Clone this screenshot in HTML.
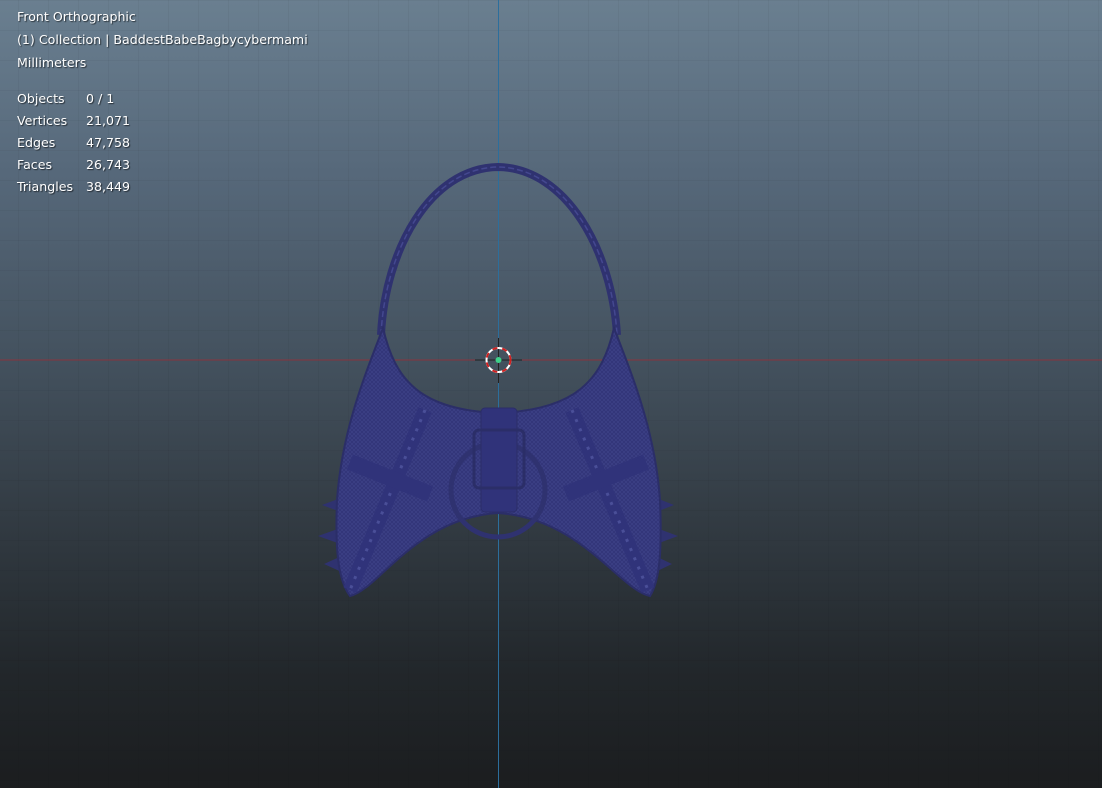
<!DOCTYPE html>
<html><head><meta charset="utf-8"><style>
html,body{margin:0;padding:0;}
body{width:1102px;height:788px;overflow:hidden;position:relative;
background:linear-gradient(to bottom,#6a7f90 0%,#56687a 22%,#44525f 45%,#333c44 65%,#22272b 85%,#1b1d1f 100%);
font-family:"DejaVu Sans","Liberation Sans",sans-serif;}
.grid{position:absolute;inset:0;
background-image:linear-gradient(to right,rgba(0,0,0,0.04) 1px,transparent 1px),linear-gradient(to bottom,rgba(0,0,0,0.04) 1px,transparent 1px);
background-size:30px 30px;background-position:18px 0;}
.t{position:absolute;color:#fff;font-size:12.6px;text-shadow:1px 1px 1px rgba(0,0,0,.6);white-space:nowrap;}
</style></head><body>
<div class="grid"></div>
<svg width="1102" height="788" style="position:absolute;left:0;top:0">
<defs>
<pattern id="m" width="4" height="4" patternUnits="userSpaceOnUse">
<rect width="4" height="4" fill="#33367a"/>
<path d="M0 0L4 4M4 0L0 4" stroke="#41458c" stroke-width="0.5"/>
</pattern>
</defs>
<line x1="0" y1="360" x2="1102" y2="360" stroke="#8a3540" stroke-width="1"/>
<line x1="498.5" y1="0" x2="498.5" y2="788" stroke="#2c6e9c" stroke-width="1"/>
<path d="M381 335 C385 250 430 168 498 167 C566 168 612 250 617 335" fill="none" stroke="#2f3270" stroke-width="8"/>
<path d="M381 335 C385 250 430 168 498 167 C566 168 612 250 617 335" fill="none" stroke="#44488f" stroke-width="1.5" stroke-dasharray="6 3"/>
<path d="M346 496 L322 505 L346 514Z M346 526 L318 536 L346 546Z M346 554 L324 564 L346 574Z M651 496 L674 505 L651 514Z M651 526 L678 536 L651 546Z M651 554 L672 564 L651 574Z" fill="#2f3270"/>
<path d="M383 328 C395 380 420 410 498 413 C576 410 602 380 614 328 C632 375 655 430 660 500 C662 550 660 580 650 596 C620 590 580 518 498 513 C416 518 378 590 350 596 C338 580 335 550 337 500 C342 430 365 375 383 328Z" fill="url(#m)" stroke="#2b2e68" stroke-width="2"/>
<path d="M425 410 L350 590 M572 410 L648 590" stroke="#30337a" stroke-width="14"/>
<path d="M425 410 L350 590 M572 410 L648 590" stroke="#4a4f98" stroke-width="3" stroke-dasharray="3 7"/>
<path d="M350 462 L430 494 M646 462 L566 494" stroke="#30337a" stroke-width="16"/>
<circle cx="498" cy="490" r="47" fill="none" stroke="#2f3270" stroke-width="5"/>
<rect x="481" y="408" width="36" height="104" rx="4" fill="#30337a" stroke="#2b2e68"/>
<rect x="474" y="430" width="50" height="58" rx="5" fill="none" stroke="#2b2e68" stroke-width="3"/>
<line x1="475" y1="360" x2="522" y2="360" stroke="#222" stroke-width="1"/>
<line x1="498.5" y1="338" x2="498.5" y2="383" stroke="#222" stroke-width="1"/>
<circle cx="498.5" cy="360" r="12" fill="none" stroke="#fff" stroke-width="2"/>
<circle cx="498.5" cy="360" r="12" fill="none" stroke="#d02020" stroke-width="2" stroke-dasharray="5 5"/>
<circle cx="498.5" cy="360" r="3" fill="#3ed08a"/>
</svg>
<div class="t" style="left:17px;top:9px">Front Orthographic</div>
<div class="t" style="left:17px;top:32px">(1) Collection | BaddestBabeBagbycybermami</div>
<div class="t" style="left:17px;top:55px">Millimeters</div>
<div class="t" style="left:17px;top:91px">Objects</div><div class="t" style="left:86px;top:91px">0 / 1</div>
<div class="t" style="left:17px;top:113px">Vertices</div><div class="t" style="left:86px;top:113px">21,071</div>
<div class="t" style="left:17px;top:135px">Edges</div><div class="t" style="left:86px;top:135px">47,758</div>
<div class="t" style="left:17px;top:157px">Faces</div><div class="t" style="left:86px;top:157px">26,743</div>
<div class="t" style="left:17px;top:179px">Triangles</div><div class="t" style="left:86px;top:179px">38,449</div>
</body></html>
